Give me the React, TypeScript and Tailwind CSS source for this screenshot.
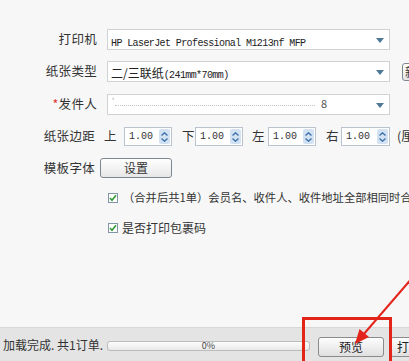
import React from 'react';

function Caret() {
  return (
    <svg width="8" height="5" viewBox="0 0 8 5" className="block">
      <path d="M0 0 H8 L4 5 Z" fill="#4f7896" />
    </svg>
  );
}

function Select({ children, className = '' }: { children: React.ReactNode; className?: string }) {
  return (
    <div
      className={`relative shrink-0 w-[283px] h-[21px] bg-white border border-[#cfd3d6] flex items-center pl-[3px] pr-[20px] ${className}`}
    >
      <div className="flex-1 overflow-hidden whitespace-nowrap leading-none">{children}</div>
      <div className="absolute right-[5px] top-[8px]">
        <Caret />
      </div>
    </div>
  );
}

function Spin({ value, className = '' }: { value: string; className?: string }) {
  return (
    <div className={`shrink-0 h-[19px] w-[48px] bg-white border border-[#b9c4cf] flex items-center ${className}`}>
      <span className="flex-1 pl-[4px] font-mono text-[10px] leading-none text-[#333]">{value}</span>
      <div className="w-[11px] h-[15px] mr-[1px] rounded-[2px] bg-[#d3e2f2] flex flex-col items-center justify-center gap-[2px]">
        <svg width="7" height="4" viewBox="0 0 7 4">
          <path d="M0.5 3.5 L3.5 0.8 L6.5 3.5" fill="none" stroke="#3f72ad" strokeWidth="1.4" />
        </svg>
        <svg width="7" height="4" viewBox="0 0 7 4">
          <path d="M0.5 0.5 L3.5 3.2 L6.5 0.5" fill="none" stroke="#3f72ad" strokeWidth="1.4" />
        </svg>
      </div>
    </div>
  );
}

function Check() {
  return (
    <div className="shrink-0 w-[10px] h-[10px] bg-white border border-[#8396a8] flex items-center justify-center">
      <svg width="8" height="8" viewBox="0 0 8 8">
        <path d="M1 4 L3 6.2 L7 1.2" fill="none" stroke="#2f9a35" strokeWidth="1.6" />
      </svg>
    </div>
  );
}

export default function App() {
  const label = 'shrink-0 w-[97px] text-right text-[12.5px] tracking-[0.3px] text-[#333] leading-none';
  const lbl = 'shrink-0 w-[12px] leading-none';

  return (
    <div className="relative w-[409px] h-[361px] overflow-hidden bg-[#f7f7f7] flex flex-col font-['Noto_Sans_CJK_SC',sans-serif]">
      <div className="flex-1 pt-[29px]">
        {/* 打印机 */}
        <div className="flex items-center h-[21px]">
          <div className={label}>打印机</div>
          <Select className="ml-[10px]">
            <span className="font-mono text-[10px] tracking-[-0.6px] text-[#222]">
              HP LaserJet Professional M1213nf MFP
            </span>
          </Select>
        </div>

        {/* 纸张类型 */}
        <div className="flex items-center h-[21px] mt-[11px]">
          <div className={label}>纸张类型</div>
          <Select className="ml-[10px]">
            <span className="text-[12px] text-[#222]">二/三联纸</span>
            <span className="font-mono text-[10px] tracking-[-0.6px] text-[#222]">(241mm*70mm)</span>
          </Select>
          <div className="ml-[12px] h-[18px] w-[30px] shrink-0 rounded-[3px] border border-[#7d8791] bg-gradient-to-b from-white to-[#e6e6e6] text-[12px] leading-[16px] pl-[2px] text-[#333]">
            新
          </div>
        </div>

        {/* 发件人 */}
        <div className="flex items-center h-[21px] mt-[12px]">
          <div className={label}>
            <span className="text-[#e0302a]">*</span>发件人
          </div>
          <Select className="ml-[10px]">
            <div className="relative h-[19px]">
              <span className="absolute left-[1px] top-[2px] text-[8px] text-[#999] leading-none">'</span>
              <div className="absolute left-[4px] top-[10px] w-[200px] border-t border-dotted border-[#c4c4c4]" />
              <span className="absolute left-[210px] top-[3px] text-[11px] text-[#555] leading-none">8</span>
            </div>
          </Select>
        </div>

        {/* 纸张边距 */}
        <div className="flex items-center h-[19px] mt-[12px] text-[12.5px] text-[#333] whitespace-nowrap">
          <div className="shrink-0 w-[95px] text-right tracking-[0.3px] leading-none">纸张边距</div>
          <span className={`ml-[9px] ${lbl}`}>上</span>
          <Spin value="1.00" className="ml-[8px]" />
          <span className={`ml-[10px] ${lbl}`}>下</span>
          <Spin value="1.00" className="ml-[1px]" />
          <span className={`ml-[9px] ${lbl}`}>左</span>
          <Spin value="1.00" className="ml-[4px]" />
          <span className={`ml-[10px] ${lbl}`}>右</span>
          <Spin value="1.00" className="ml-[3px] w-[49px]" />
          <span className="ml-[7px] shrink-0 leading-none">(厘米)</span>
        </div>

        {/* 模板字体 */}
        <div className="flex items-center h-[20px] mt-[12px]">
          <div className="shrink-0 w-[95px] text-right text-[12.5px] tracking-[0.3px] text-[#333] leading-none">模板字体</div>
          <button
            type="button"
            className="shrink-0 ml-[5px] w-[72px] h-[20px] rounded-[3px] border border-[#7d8791] bg-gradient-to-b from-white to-[#e7e7e7] text-[12px] text-[#333] leading-none"
          >
            设置
          </button>
        </div>

        {/* checkboxes */}
        <div className="flex items-center h-[20px] mt-[10px] pl-[108px] whitespace-nowrap">
          <Check />
          <span className="shrink-0 ml-[5px] text-[11.3px] text-[#333] leading-none">
            （合并后共1单）会员名、收件人、收件地址全部相同时合并
          </span>
        </div>
        <div className="flex items-center h-[20px] mt-[10px] pl-[108px]">
          <Check />
          <span className="ml-[4px] text-[12px] text-[#333] leading-none">是否打印包裹码</span>
        </div>
      </div>

      {/* status bar */}
      <div className="h-[34px] shrink-0 bg-[#e4e4e4] border-t border-[#d8d8d8] flex items-center whitespace-nowrap">
        <span className="shrink-0 ml-[3px] w-[96px] text-[12px] text-[#333] leading-none">加载完成. 共1订单.</span>
        <div className="shrink-0 ml-[8px] w-[203px] h-[10px] mt-[2px] rounded-[3px] border border-[#bcbcbc] bg-gradient-to-b from-[#fdfdfd] to-[#e9e9e9] flex items-center justify-center">
          <span className="text-[9px] text-[#444] leading-none">0%</span>
        </div>
        <button
          type="button"
          className="shrink-0 ml-[8px] mt-[4px] w-[66px] h-[20px] rounded-[3px] border border-[#8b8b8b] bg-gradient-to-b from-[#fdfdfd] to-[#e0e0e0] text-[12px] text-[#222] leading-none"
        >
          预览
        </button>
        <button
          type="button"
          className="shrink-0 ml-[6px] mt-[4px] w-[66px] h-[20px] rounded-[3px] border border-[#8b8b8b] bg-gradient-to-b from-[#fdfdfd] to-[#e0e0e0] text-[12px] text-[#222] leading-none text-left pl-[6px]"
        >
          打印
        </button>
      </div>

      {/* annotation: red box */}
      <div className="absolute left-[302px] top-[317px] w-[90px] h-[60px] border-[3px] border-[#e3241b] pointer-events-none" />

      {/* annotation: red arrow */}
      <svg className="absolute left-0 top-0 pointer-events-none" width="409" height="361" viewBox="0 0 409 361">
        <line x1="413" y1="277" x2="363" y2="335" stroke="#e3241b" strokeWidth="2" />
        <path d="M355 344 L369 337 L359.5 329 Z" fill="#e3241b" />
      </svg>
    </div>
  );
}
